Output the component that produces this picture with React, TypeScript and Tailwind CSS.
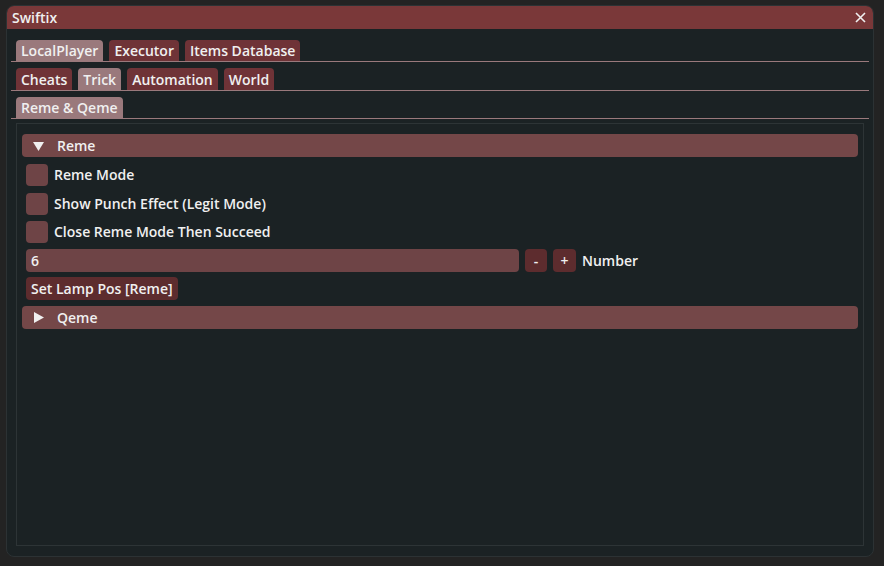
import React from "react";

const font = { fontFamily: '"Open Sans", "Noto Sans", sans-serif' };

function Tab({ label, active, h }: { label: string; active?: boolean; h: string }) {
  return (
    <div
      className={`${h} px-[5px] flex items-center rounded-t-[4px] text-[14px] font-semibold text-[#f0f0f0] ${
        active ? "bg-[#9a797c]" : "bg-[#6f3337]"
      }`}
    >
      {label}
    </div>
  );
}

function TabRow({ tabs, active, h }: { tabs: string[]; active: number; h: string }) {
  return (
    <div className="flex gap-[6px] border-b border-[#9a797c] mx-[4px] px-[5px]">
      {tabs.map((t, i) => (
        <Tab key={t} label={t} active={i === active} h={h} />
      ))}
    </div>
  );
}

function Checkbox({ label, mb }: { label: string; mb: string }) {
  return (
    <div className={`flex items-center gap-[6px] h-[23px] ml-[4px] ${mb}`}>
      <div className="w-[22px] h-[22px] rounded-[4px] bg-[#6e4446]" />
      <span className="text-[14px] font-semibold text-[#f0f0f0]">{label}</span>
    </div>
  );
}

function Header({ label, open }: { label: string; open?: boolean }) {
  return (
    <div className="h-[23px] rounded-[4px] bg-[#744748] flex items-center pl-[11px] text-[14px] font-semibold text-[#f0f0f0]">
      {open ? (
        <svg width="11" height="10" viewBox="0 0 11 10" className="mr-[13px]">
          <polygon points="0,1 11,1 5.5,10" fill="#f0f0f0" />
        </svg>
      ) : (
        <svg width="11" height="11" viewBox="0 0 11 11" className="mr-[13px]">
          <polygon points="1,0 11,5.5 1,11" fill="#f0f0f0" />
        </svg>
      )}
      {label}
    </div>
  );
}

export default function App() {
  return (
    <div className="w-[884px] h-[566px] bg-[#232323] pt-[5px] pl-[6px] pr-[10px] pb-[9px]" style={font}>
      <div className="w-full h-full bg-[#1b2224] rounded-[8px] border border-[#2c3234] flex flex-col overflow-hidden">
        <div className="h-[23px] bg-[#7a3839] flex items-center justify-between pl-[5px] pr-[7px] shrink-0">
          <span className="text-[14px] font-semibold text-[#f0f0f0]">Swiftix</span>
          <svg width="11" height="11" viewBox="0 0 11 11">
            <path d="M1 1 L10 10 M10 1 L1 10" stroke="#f0f0f0" strokeWidth="1.6" />
          </svg>
        </div>
        <div className="flex flex-col gap-[6px] pt-[11px]">
          <TabRow tabs={["LocalPlayer", "Executor", "Items Database"]} active={0} h="h-[21px]" />
          <TabRow tabs={["Cheats", "Trick", "Automation", "World"]} active={1} h="h-[22px]" />
          <TabRow tabs={["Reme & Qeme"]} active={0} h="h-[21px]" />
        </div>
        <div className="flex-1 mx-[9px] mt-[4px] mb-[10px] border border-[#2d3436] px-[5px] pt-[10px] flex flex-col">
          <div className="mb-[6px]">
            <Header label="Reme" open />
          </div>
          <Checkbox label="Reme Mode" mb="mb-[6px]" />
          <Checkbox label="Show Punch Effect (Legit Mode)" mb="mb-[5px]" />
          <Checkbox label="Close Reme Mode Then Succeed" mb="mb-[6px]" />
          <div className="flex items-center gap-[6px] ml-[4px] h-[23px] mb-[5px]">
            <div className="w-[493px] h-[23px] rounded-[4px] bg-[#6e4446] flex items-center px-[5px] text-[14px] font-semibold text-[#f0f0f0]">
              6
            </div>
            <div className="w-[22px] h-[23px] rounded-[4px] bg-[#5d2c2e] flex items-center justify-center text-[14px] font-semibold text-[#f0f0f0]">
              -
            </div>
            <div className="w-[23px] h-[23px] rounded-[4px] bg-[#5d2c2e] flex items-center justify-center text-[14px] font-semibold text-[#f0f0f0]">
              +
            </div>
            <span className="text-[14px] font-semibold text-[#f0f0f0]">Number</span>
          </div>
          <div className="ml-[4px] flex mb-[6px]">
            <div className="h-[23px] rounded-[4px] bg-[#5d2c2e] flex items-center px-[5px] text-[14px] font-semibold text-[#f0f0f0]">
              Set Lamp Pos [Reme]
            </div>
          </div>
          <Header label="Qeme" />
        </div>
      </div>
    </div>
  );
}
